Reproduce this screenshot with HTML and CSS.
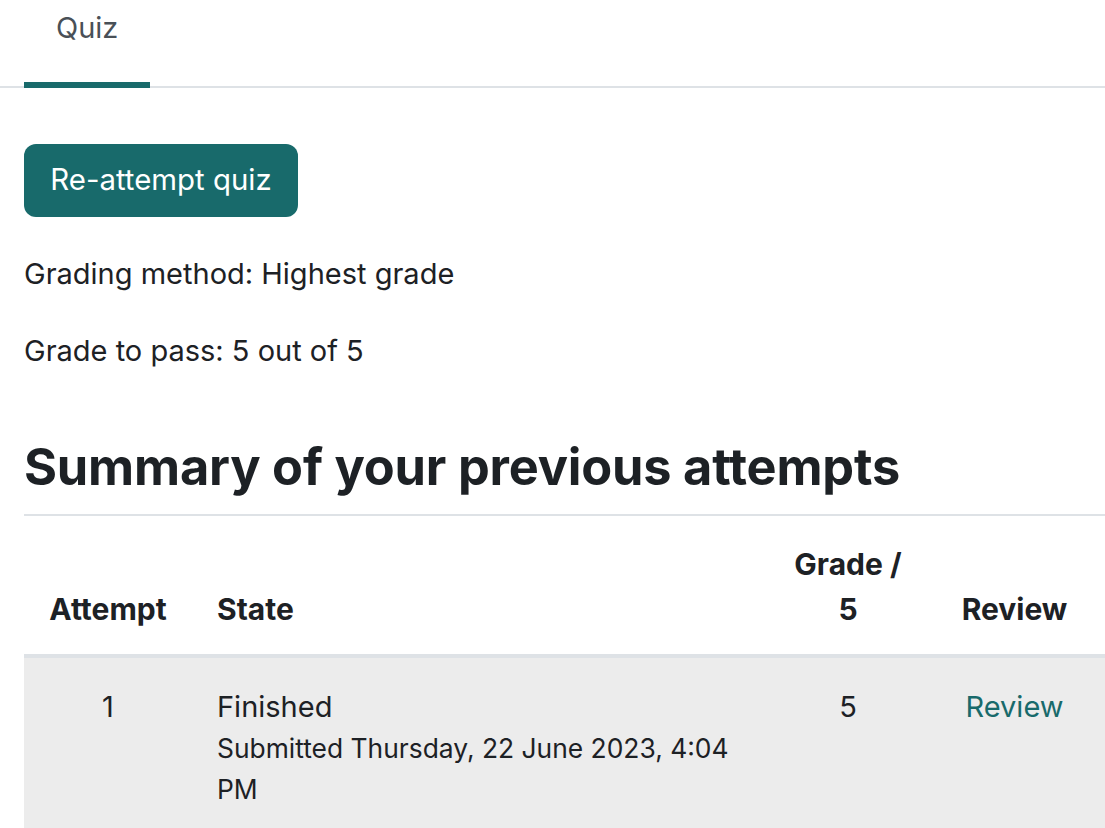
FILE: index.html
```html
<!DOCTYPE html>
<html lang="en">
<head>
<meta charset="utf-8">
<title>Quiz</title>
<link rel="stylesheet" href="styles.css">
</head>
<body>
<nav class="tabs">
  <a class="tab active" href="#">Quiz</a>
</nav>
<main class="content">
  <button class="btn-primary" type="button">Re-attempt quiz</button>
  <p class="info">Grading method: Highest grade</p>
  <p class="info">Grade to pass: 5 out of 5</p>
  <h2 class="summary-title">Summary of your previous attempts</h2>
  <table class="attempts">
    <colgroup>
      <col class="c-attempt">
      <col class="c-state">
      <col class="c-grade">
      <col class="c-review">
    </colgroup>
    <thead>
      <tr>
        <th class="center">Attempt</th>
        <th class="left">State</th>
        <th class="center">Grade /<br>5</th>
        <th class="center">Review</th>
      </tr>
    </thead>
    <tbody>
      <tr>
        <td class="center">1</td>
        <td class="left">Finished<span class="submitted">Submitted Thursday, 22 June 2023, 4:04 PM</span></td>
        <td class="center">5</td>
        <td class="center"><a class="link" href="#">Review</a></td>
      </tr>
    </tbody>
  </table>
</main>
</body>
</html>
```

FILE: styles.css
```css
html, body {
  margin: 0;
  padding: 0;
  background: #ffffff;
}
body {
  font-family: Inter, "Noto Sans", sans-serif;
  color: #1d2125;
  font-size: 29px;
  line-height: 1.5;
  overflow: hidden;
}
.tabs {
  display: flex;
  border-bottom: 2px solid #dee2e6;
  padding-left: 24px;
  height: 86px;
}
.tab {
  display: block;
  width: 126px;
  box-sizing: border-box;
  padding: 6px 0 0 32px;
  height: 88px;
  color: #495057;
  text-decoration: none;
  font-size: 29px;
}
.tab.active {
  border-bottom: 6px solid #186a6b;
}
.content {
  padding-left: 24px;
}
.btn-primary {
  display: block;
  margin-top: 56px;
  width: 274px;
  height: 73px;
  border: none;
  border-radius: 12px;
  background: #186a6b;
  color: #ffffff;
  font-family: Inter, "Noto Sans", sans-serif;
  font-size: 29.4px;
  padding: 0 0 2px 0;
}
.info {
  margin: 0;
  line-height: 40px;
}
.btn-primary + .info {
  margin-top: 37px;
}
.info + .info {
  margin-top: 37px;
}
.summary-title {
  margin: 66px 0 0 0;
  font-size: 50.5px;
  font-weight: 700;
  line-height: 60px;
  letter-spacing: -0.2px;
  padding-bottom: 17px;
}
.attempts {
  width: 1081px;
  border-collapse: collapse;
  table-layout: fixed;
  border-top: 2px solid #dee2e6;
}
.c-attempt { width: 168px; }
.c-state { width: 580px; }
.c-grade { width: 152px; }
.c-review { width: 181px; }
.attempts th,
.attempts td {
  padding: 25px 20px;
  vertical-align: bottom;
  line-height: 45px;
}
.attempts th {
  font-weight: 700;
  font-size: 30px;
  padding-top: 26px;
  padding-bottom: 22px;
  border-bottom: 4px solid #dee2e6;
}
.attempts td {
  vertical-align: top;
  background: #ececec;
  line-height: 41px;
  padding-top: 28px;
}
.attempts td.left,
.attempts th.left {
  padding-left: 25px;
}
.center { text-align: center; }
.left { text-align: left; }
.submitted {
  display: block;
  font-size: 26.4px;
  margin-top: 1px;
}
.link {
  color: #186a6b;
  text-decoration: none;
}
```
